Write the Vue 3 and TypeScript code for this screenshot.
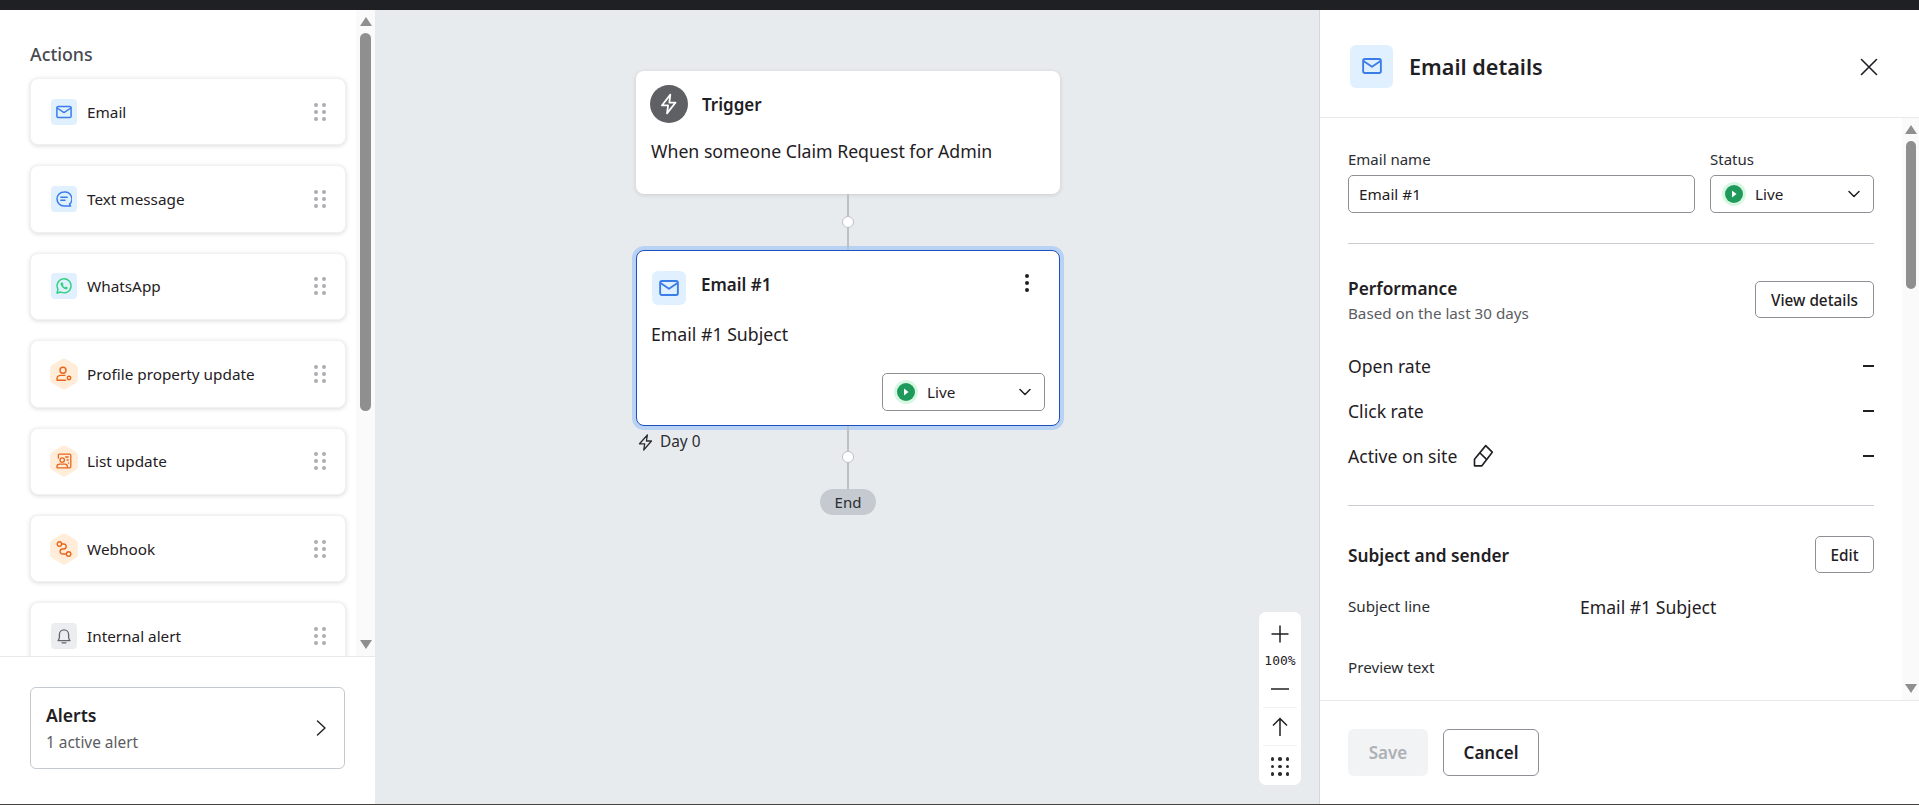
<script setup lang="ts">
interface ActionItem { label: string; icon: string; shape: 'square' | 'hex'; tone: string }
const actions: ActionItem[] = [
  { label: 'Email', icon: 'email', shape: 'square', tone: 'blue' },
  { label: 'Text message', icon: 'sms', shape: 'square', tone: 'blue' },
  { label: 'WhatsApp', icon: 'whatsapp', shape: 'square', tone: 'blue' },
  { label: 'Profile property update', icon: 'profile', shape: 'hex', tone: 'orange' },
  { label: 'List update', icon: 'list', shape: 'hex', tone: 'orange' },
  { label: 'Webhook', icon: 'webhook', shape: 'hex', tone: 'orange' },
  { label: 'Internal alert', icon: 'bell', shape: 'square', tone: 'gray' },
]
const metrics = ['Open rate', 'Click rate', 'Active on site']
const dots = [0, 1, 2, 3, 4, 5]
</script>

<template>
  <div class="page">
    <div class="topbar"></div>
    <div class="main">
      <aside class="sidebar">
        <div class="side-scroll">
          <div class="side-list">
            <h3 class="side-title">Actions</h3>
            <div v-for="a in actions" :key="a.label" class="action">
              <span class="a-icon" :class="[a.shape, a.tone]">
                <svg v-if="a.shape === 'hex'" class="hexbg" viewBox="0 0 28 32"><path d="M12.2 1.1a3.6 3.6 0 0 1 3.6 0l10.2 5.9a3.6 3.6 0 0 1 1.8 3.1v11.8a3.6 3.6 0 0 1-1.8 3.1L15.8 31a3.6 3.6 0 0 1-3.6 0L2 25a3.6 3.6 0 0 1-1.8-3.1V10.1A3.6 3.6 0 0 1 2 7z" fill="#ffecd9"/></svg>
                <svg class="glyph" viewBox="0 0 16 16" width="16" height="16" fill="none" stroke-width="1.3" stroke-linecap="round" stroke-linejoin="round">
                  <template v-if="a.icon === 'email'">
                    <rect x="0.9" y="2.4" width="14.2" height="11.2" rx="1.4" stroke="#3b7de8" stroke-width="1.5"/>
                    <path d="M1.2 4l6.8 4.6L14.8 4" stroke="#3b7de8" stroke-width="1.5"/>
                  </template>
                  <template v-else-if="a.icon === 'sms'">
                    <path d="M8 1a7 7 0 1 0 0 14h6.6l-1-1.9A7 7 0 0 0 8 1z" stroke="#3b7de8" stroke-width="1.5"/>
                    <path d="M4.8 6.3h6.4M4.8 9.3h4.2" stroke="#3b7de8" stroke-width="1.5"/>
                  </template>
                  <template v-else-if="a.icon === 'whatsapp'">
                    <path d="M1 15l1-3.7A7 7 0 1 1 4.8 14z" stroke="#2fd07a" stroke-width="1.4"/>
                    <path d="M5.4 4.6c-.8.7-.9 1.8-.3 3 .8 1.6 2 2.7 3.6 3.4 1.2.5 2.2.3 2.8-.6l.2-.9-1.9-1-.8.9c-1-.4-1.7-1.1-2.2-2.1l.7-.8-.8-2z" fill="#2fd07a" stroke="none"/>
                  </template>
                  <template v-else-if="a.icon === 'profile'">
                    <circle cx="7" cy="4.2" r="3" stroke="#e8661a" stroke-width="1.4"/>
                    <path d="M1 14.2v-1.4c0-2 1.7-3.4 3.6-3.4h4.2M1 14.2h8.6" stroke="#e8661a" stroke-width="1.4"/>
                    <circle cx="13" cy="12" r="1.7" stroke="#e8661a" stroke-width="1.5"/>
                  </template>
                  <template v-else-if="a.icon === 'list'">
                    <path d="M2.4 5V2.4a1.2 1.2 0 0 1 1.2-1.2h10a1.2 1.2 0 0 1 1.2 1.2v11.2a1.2 1.2 0 0 1-1.2 1.2h-1.4" stroke="#e8661a" stroke-width="1.3"/>
                    <circle cx="6.2" cy="7" r="2.2" stroke="#e8661a" stroke-width="1.3"/>
                    <path d="M1 14.8v-1c0-1.5 1.2-2.6 2.7-2.6h5c1.5 0 2.7 1.1 2.7 2.6v1z" stroke="#e8661a" stroke-width="1.3"/>
                    <path d="M9.6 4h2.6M11 7h1.2M12.4 10h.2" stroke="#e8661a" stroke-width="1.3"/>
                  </template>
                  <template v-else-if="a.icon === 'webhook'">
                    <circle cx="3.4" cy="3" r="2.2" stroke="#e8661a" stroke-width="1.4"/>
                    <circle cx="12.6" cy="13" r="2.2" stroke="#e8661a" stroke-width="1.4"/>
                    <path d="M5.6 3h2.2a2.4 2.4 0 0 1 2.4 2.5A2.5 2.5 0 0 1 7.8 8H6.6a2.5 2.5 0 0 0 0 5h3.8" stroke="#e8661a" stroke-width="1.4"/>
                  </template>
                  <template v-else>
                    <path d="M2 12.6c.9-1 1.4-1.800 1.400-3.400V6.400a4.600 4.600 0 0 1 9.200 0v2.800c0 1.600.5 2.400 1.400 3.400z" stroke="#62656b" stroke-width="1.3"/>
                    <path d="M6 14.800h4" stroke="#62656b" stroke-width="1.3"/>
                  </template>
                </svg>
              </span>
              <span class="a-label">{{ a.label }}</span>
              <span class="grip"><i v-for="d in dots" :key="d"></i></span>
            </div>
          </div>
          <div class="vbar">
            <span class="arrow up"></span>
            <span class="track"><span class="thumb side-thumb"></span></span>
            <span class="arrow down"></span>
          </div>
        </div>
        <div class="side-foot">
          <div class="alerts">
            <div>
              <div class="alerts-title">Alerts</div>
              <div class="alerts-sub">1 active alert</div>
            </div>
            <svg width="11" height="18" viewBox="0 0 11 18" fill="none"><path d="M1.500 2l7.500 7-7.500 7" stroke="#1f2024" stroke-width="1.400" stroke-linecap="round" stroke-linejoin="round"/></svg>
          </div>
        </div>
      </aside>

      <section class="canvas">
        <div class="flow">
          <div class="node trigger">
            <div class="node-head">
              <span class="bolt">
                <svg width="22" height="22" viewBox="0 0 20 20" fill="none"><path d="M11.200 1.500L3.500 11.300h5.700l-1 7.200 7.800-9.800H10.300z" stroke="#fff" stroke-width="1.600" stroke-linejoin="round"/></svg>
              </span>
              <span class="node-title">Trigger</span>
            </div>
            <p class="node-text">When someone Claim Request for Admin</p>
          </div>
          <div class="conn c1"><span class="knob"></span></div>
          <div class="node email">
            <div class="node-head email-head">
              <span class="mail-box small">
                <svg width="20" height="20" viewBox="0 0 16 16" fill="none"><rect x="0.900" y="2.400" width="14.200" height="11.200" rx="1.400" stroke="#3b7de8" stroke-width="1.500"/><path d="M1.200 4l6.800 4.600L14.800 4" stroke="#3b7de8" stroke-width="1.500" stroke-linejoin="round"/></svg>
              </span>
              <span class="node-title">Email #1</span>
              <span class="kebab"><i></i><i></i><i></i></span>
            </div>
            <p class="node-text subj">Email #1 Subject</p>
            <div class="node-foot">
              <div class="select node-select">
                <span class="live-dot"><svg width="10" height="10" viewBox="0 0 10 10"><path d="M3 1.500l4.500 3.500L3 8.500z" fill="#fff"/></svg></span>
                <span class="sel-label">Live</span>
                <svg class="chev" width="12" height="8" viewBox="0 0 12 8" fill="none"><path d="M1 1.500l5 5 5-5" stroke="#1f2024" stroke-width="1.500" stroke-linecap="round" stroke-linejoin="round"/></svg>
              </div>
            </div>
          </div>
          <div class="under">
            <div class="day">
              <svg width="16" height="17" viewBox="0 0 16 17" fill="none"><path d="M9.400 1L1.500 9.800h5.200l-1 6.200 7.800-9H8.400z" stroke="#2b2d31" stroke-width="1.300" stroke-linejoin="round"/></svg>
              <span>Day 0</span>
            </div>
            <div class="conn c2"><span class="knob"></span></div>
          </div>
          <div class="end">End</div>
        </div>

        <div class="zoomer">
          <div class="z-btn z-plus"><svg width="18" height="18" viewBox="0 0 18 18"><path d="M9 .5v17M.5 9h17" stroke="#1f2024" stroke-width="1.500"/></svg></div>
          <div class="z-val">100%</div>
          <div class="z-btn z-minus"><svg width="18" height="2" viewBox="0 0 18 2"><path d="M0 1h18" stroke="#1f2024" stroke-width="1.500"/></svg></div>
          <div class="z-sep"></div>
          <div class="z-btn z-up"><svg width="16" height="20" viewBox="0 0 16 20" fill="none"><path d="M8 19V1.500M1 8.500l7-7 7 7" stroke="#1f2024" stroke-width="1.500"/></svg></div>
          <div class="z-sep"></div>
          <div class="z-grid"><i v-for="n in 9" :key="n"></i></div>
        </div>
      </section>

      <aside class="details">
        <header class="d-head">
          <span class="mail-box">
            <svg width="20" height="20" viewBox="0 0 16 16" fill="none"><rect x="0.900" y="2.400" width="14.200" height="11.200" rx="1.400" stroke="#3b7de8" stroke-width="1.500"/><path d="M1.200 4l6.800 4.600L14.800 4" stroke="#3b7de8" stroke-width="1.500" stroke-linejoin="round"/></svg>
          </span>
          <h2 class="d-title">Email details</h2>
          <svg class="close" width="18" height="18" viewBox="0 0 18 18" fill="none"><path d="M1.500 1.500l15 15M16.500 1.500l-15 15" stroke="#1f2024" stroke-width="1.600" stroke-linecap="round"/></svg>
        </header>
        <div class="d-scroll">
          <div class="d-body">
            <div class="form-row">
              <label class="field f-name">
                <span class="f-label">Email name</span>
                <span class="input">Email #1</span>
              </label>
              <div class="field f-status">
                <span class="f-label">Status</span>
                <div class="select">
                  <span class="live-dot"><svg width="10" height="10" viewBox="0 0 10 10"><path d="M3 1.500l4.500 3.500L3 8.500z" fill="#fff"/></svg></span>
                  <span class="sel-label">Live</span>
                  <svg class="chev" width="12" height="8" viewBox="0 0 12 8" fill="none"><path d="M1 1.500l5 5 5-5" stroke="#1f2024" stroke-width="1.500" stroke-linecap="round" stroke-linejoin="round"/></svg>
                </div>
              </div>
            </div>
            <hr class="rule rule1" />
            <div class="sec-head perf">
              <div>
                <div class="sec-title">Performance</div>
                <div class="sec-sub">Based on the last 30 days</div>
              </div>
              <button class="btn view">View details</button>
            </div>
            <div class="metrics">
              <div v-for="m in metrics" :key="m" class="metric">
                <span class="m-name">{{ m }}
                  <svg v-if="m === 'Active on site'" class="eraser" width="22" height="24" viewBox="0 0 20 22" fill="none"><path d="M12.500 1.500l6 6L9 20H2.200v-6z" stroke="#1f2024" stroke-width="1.500" stroke-linejoin="round"/><path d="M7 8l6.500 6.300" stroke="#1f2024" stroke-width="1.500"/></svg>
                </span>
                <span class="m-dash"></span>
              </div>
            </div>
            <hr class="rule rule2" />
            <div class="sec-head subj-head">
              <div class="sec-title">Subject and sender</div>
              <button class="btn edit">Edit</button>
            </div>
            <div class="kv"><span class="k">Subject line</span><span class="v">Email #1 Subject</span></div>
            <div class="kv kv2"><span class="k">Preview text</span></div>
          </div>
          <div class="vbar dbar">
            <span class="arrow up"></span>
            <span class="track"><span class="thumb d-thumb"></span></span>
            <span class="arrow down"></span>
          </div>
        </div>
        <footer class="d-foot">
          <button class="btn save">Save</button>
          <button class="btn cancel">Cancel</button>
        </footer>
      </aside>
    </div>
    <div class="bottomline"></div>
  </div>
</template>

<style>
html, body { margin: 0; background: #fff; }
</style>

<style scoped>
.page {
  height: 805px; width: 1919px; overflow: hidden; display: flex; flex-direction: column;
  font-family: "Noto Sans", "Open Sans", sans-serif; color: #1f2024; font-size: 15px;
}
.topbar { height: 10px; background: #1f2024; flex: none; }
.bottomline { height: 1px; background: #45423f; flex: none; }
.main { flex: 1; display: flex; min-height: 0; }

/* sidebar */
.sidebar { width: 375px; flex: none; display: flex; flex-direction: column; background: #fff; }
.side-scroll { height: 646px; flex: none; display: flex; overflow: hidden; border-bottom: 1px solid #e8e9eb; box-sizing: content-box; }
.side-list { flex: 1; padding: 32px 0 0 30px; overflow: hidden; min-width: 0; }
.side-title { margin: 0 0 12px; font-size: 17.800px; line-height: 24px; font-weight: 500; color: #484a4f; padding-left: 0; }
.action {
  width: 316px; height: 67.4px; box-sizing: border-box; margin-bottom: 20px; border-radius: 8px; background: #fff;
  border: 1px solid #f0f1f2; box-shadow: 0 1px 4px rgba(31, 32, 36, .16);
  display: flex; align-items: center; padding: 0 19px 0 20px; flex: none;
}
.a-icon { width: 26px; height: 26px; border-radius: 4px; display: flex; align-items: center; justify-content: center; position: relative; flex: none; }
.a-icon.blue { background: #e1f0ff; }
.a-icon.gray { background: #ebedf0; }
.hexbg { position: absolute; left: -1px; top: -3px; width: 28px; height: 32px; }
.glyph { position: relative; }
.a-label { margin-left: 10px; flex: 1; font-size: 15.300px; color: #1f2024; }
.grip { display: grid; grid-template-columns: 4px 4px; gap: 3px 4px; }
.grip i { width: 4px; height: 4px; border-radius: 50%; background: #abadb3; display: block; }

.vbar { width: 19px; flex: none; background: #fafafa; display: flex; flex-direction: column; align-items: center; }
.arrow { width: 0; height: 0; border-left: 6px solid transparent; border-right: 6px solid transparent; flex: none; }
.arrow.up { border-bottom: 9px solid #8f8f8f; margin-top: 7px; }
.arrow.down { border-top: 9px solid #8f8f8f; margin-bottom: 7px; }
.track { flex: 1; width: 100%; display: flex; justify-content: center; align-items: flex-start; min-height: 0; }
.thumb { width: 11px; background: #8f8f8f; border-radius: 6px; display: block; }
.side-thumb { height: 378px; margin-top: 7px; }

.side-foot { flex: 1; padding: 30px 30px 0; }
.alerts {
  width: 315px; height: 82px; box-sizing: border-box; border: 1px solid #c5c9d0; border-radius: 6px;
  display: flex; align-items: center; justify-content: space-between; padding: 0 17px 0 15px;
}
.alerts-title { font-size: 17.600px; font-weight: 600; line-height: 24px; }
.alerts-sub { font-size: 15.400px; line-height: 20px; color: #5a5c62; margin-top: 6px; }

/* canvas */
.canvas { flex: 1; position: relative; background: #e8ebee; border-right: 1px solid #d3d7df; min-width: 0; }
.flow { display: flex; flex-direction: column; align-items: center; padding: 61px 0 0 2px; }
.node { width: 424px; box-sizing: border-box; background: #fff; border-radius: 8px; }
.trigger { height: 123px; padding: 14px 14px 0; box-shadow: 0 1px 4px rgba(31, 32, 36, .15); }
.node-head { display: flex; align-items: center; }
.bolt { width: 38px; height: 38px; border-radius: 50%; background: #5f6064; display: flex; align-items: center; justify-content: center; flex: none; }
.node-title { font-size: 17px; font-weight: 600; margin: 2px 0 0 14px; line-height: 24px; }
.node-text { margin: 15px 0 0 1px; font-size: 17.700px; line-height: 26px; }
.conn { width: 2px; background: #bcc0c7; position: relative; }
.c1 { height: 56px; }
.knob { position: absolute; left: -5px; width: 12px; height: 12px; box-sizing: border-box; border-radius: 50%; background: #fff; border: 1.500px solid #bcc0c7; top: 22px; }
.email {
  height: 176px; border: 1.500px solid #1c4fc0; box-shadow: 0 0 0 4px #b7d2f2; padding: 20px 14px 0 14px; display: flex; flex-direction: column;
}
.email-head { align-items: flex-start; }
.mail-box { background: #e1f0ff; border-radius: 6px; display: flex; align-items: center; justify-content: center; flex: none; width: 43px; height: 43px; }
.mail-box.small { width: 34px; height: 34px; margin-left: 1px; }
.email-head .node-title { margin-left: 15px; flex: 1; line-height: 24px; }
.kebab { display: flex; flex-direction: column; gap: 3px; margin-right: 16px; margin-top: 3px; }
.kebab i { width: 4px; height: 4px; border-radius: 50%; background: #1f2024; display: block; }
.subj { margin: 16px 0 0 0; }
.node-foot { margin-top: auto; display: flex; justify-content: flex-end; padding-bottom: 14px; }
.select {
  height: 38px; box-sizing: border-box; border: 1px solid #8e9096; border-radius: 5px; background: #fff;
  display: flex; align-items: center; padding: 0 13px 0 11px;
}
.node-select { width: 163px; }
.live-dot { width: 18px; height: 18px; border-radius: 50%; background: #1f9a5b; box-shadow: 0 0 0 3px #d8f7e2; display: flex; align-items: center; justify-content: center; flex: none; margin-left: 3px; }
.sel-label { margin-left: 12px; flex: 1; font-size: 15.300px; }
.chev { flex: none; }

.under { width: 424px; position: relative; display: flex; justify-content: center; }
.day { position: absolute; left: 2px; top: 6px; display: flex; align-items: center; gap: 6px; font-size: 15.400px; line-height: 20px; color: #2b2d31; }
.c2 { height: 63px; }
.c2 .knob { top: 25px; }
.end { width: 56px; height: 26px; border-radius: 13px; background: #c5c9d0; display: flex; align-items: center; justify-content: center; font-size: 15px; color: #2b2d31; }

.zoomer {
  position: absolute; left: 884px; top: 602px; width: 42px; height: 173px; background: #fff; border-radius: 7px;
  display: flex; flex-direction: column; align-items: center;
}
.z-btn { display: flex; align-items: center; justify-content: center; flex: none; }
.z-plus { height: 18px; margin-top: 13px; }
.z-val { font-family: "DejaVu Sans Mono", "Liberation Mono", monospace; font-size: 13px; line-height: 16px; margin-top: 10px; }
.z-minus { height: 2px; margin-top: 19px; }
.z-sep { width: 34px; height: 1px; background: #f0f1f2; flex: none; }
.z-minus + .z-sep { margin-top: 17px; }
.z-up { height: 20px; margin-top: 9px; }
.z-up + .z-sep { margin-top: 8px; }
.z-grid { display: grid; grid-template-columns: repeat(3, 3.500px); gap: 4px; margin-top: 11px; }
.z-grid i { width: 3.500px; height: 3.500px; border-radius: 50%; background: #2b2d31; display: block; }

/* details */
.details { width: 599px; flex: none; display: flex; flex-direction: column; background: #fff; }
.d-head { height: 108px; box-sizing: border-box; border-bottom: 1px solid #e8e9eb; display: flex; align-items: center; padding: 5px 41px 0 30px; flex: none; }
.d-title { margin: 1px 0 0 16px; flex: 1; font-size: 21.600px; font-weight: 600; line-height: 28px; }
.close { flex: none; margin-top: 1px; }
.d-scroll { height: 582px; flex: none; display: flex; overflow: hidden; border-bottom: 1px solid #e8e9eb; }
.d-body { flex: 1; min-width: 0; padding: 32px 28px 0 28px; overflow: hidden; }
.dbar { width: 17px; }
.d-thumb { height: 148px; margin-top: 7px; width: 10px; }
.form-row { display: flex; gap: 15px; }
.field { display: flex; flex-direction: column; }
.f-name { flex: 1; }
.f-status { width: 164px; }
.f-label { font-size: 15px; line-height: 19px; margin-bottom: 6px; color: #2b2d31; }
.input { height: 38px; box-sizing: border-box; border: 1px solid #8e9096; border-radius: 5px; padding: 0 10px; display: flex; align-items: center; font-size: 15.300px; }
.rule { border: 0; height: 1px; background: #c9ccd1; margin: 0; }
.rule1 { margin-top: 30px; }
.sec-head { display: flex; justify-content: space-between; }
.perf { margin-top: 33px; align-items: flex-start; }
.sec-title { font-size: 17.300px; font-weight: 600; line-height: 24px; }
.sec-sub { font-size: 15.200px; line-height: 20px; color: #5a5c62; margin-top: 2px; }
.btn { font-family: inherit; box-sizing: border-box; background: #fff; border: 1px solid #8e9096; border-radius: 5px; color: #1f2024; font-weight: 500; font-size: 15.300px; padding: 0; }
.view { width: 119px; height: 37px; margin-top: 4px; }
.metrics { margin-top: 20px; }
.metric { height: 45px; display: flex; align-items: center; justify-content: space-between; font-size: 17.600px; }
.m-name { display: flex; align-items: center; gap: 15px; line-height: 24px; }
.m-dash { width: 11px; height: 2px; background: #1f2024; }
.rule2 { margin-top: 27px; }
.subj-head { margin-top: 30px; align-items: center; }
.subj-head .sec-title { margin-top: 2px; }
.edit { width: 59px; height: 37px; }
.kv { display: flex; margin-top: 22px; align-items: center; }
.kv2 { margin-top: 39px; }
.k { width: 232px; font-size: 15.200px; line-height: 20px; color: #2b2d31; position: relative; top: -1px; }
.v { font-size: 17.600px; line-height: 24px; }
.d-foot { flex: 1; display: flex; gap: 15px; padding: 28px 0 0 28px; }
.save { width: 80px; height: 47px; background: #f1f3f5; border: 0; color: #aeb0b5; font-size: 17px; font-weight: 600; border-radius: 6px; }
.cancel { width: 96px; height: 47px; font-size: 17px; font-weight: 600; border-radius: 6px; }
</style>
